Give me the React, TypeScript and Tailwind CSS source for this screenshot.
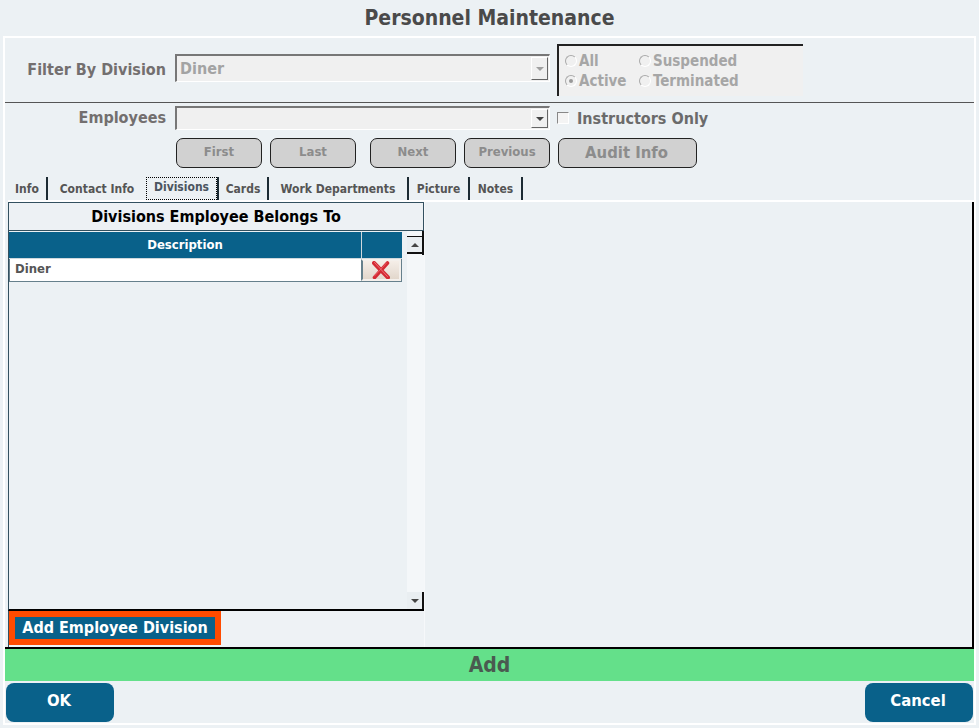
const TABS = [
  { label: 'Info', width: 'w-[40px]' },
  { label: 'Contact Info', width: 'w-[98px]', noDivider: true },
  { label: 'Divisions', width: 'w-[73px]', active: true },
  { label: 'Cards', width: 'w-[50px]' },
  { label: 'Work Departments', width: 'w-[140px]' },
  { label: 'Picture', width: 'w-[61px]' },
  { label: 'Notes', width: 'w-[53px]' },
]

function Arrow({ dim }: { dim?: boolean }) {
  return (
    <div className={'w-0 h-0 border-x-[4px] border-x-transparent border-t-[4px] ' + (dim ? 'border-t-[#a0a0a0]' : 'border-t-[#444]')} />
  )
}

function Select({ value, disabled, className }: { value?: string; disabled?: boolean; className: string }) {
  return (
    <div className={'w-[375px] flex items-stretch bg-[#f0f0f0] border-l-2 border-t-2 border-[#777] border-r border-b border-r-white border-b-white ' + className}>
      <div className="flex-1 pl-[3px] flex items-center text-[16px] font-bold text-[#a3a3a3]">{value}</div>
      <div className="w-[17px] my-[1px] mr-[1px] flex items-center justify-center border-r border-b border-[#666] border-t border-l border-t-white border-l-white">
        <Arrow dim={disabled} />
      </div>
    </div>
  )
}

function Radio({ label, checked, className }: { label: string; checked?: boolean; className: string }) {
  return (
    <div className={'flex items-center gap-[2px] ' + className}>
      <div className="w-[12px] h-[12px] rounded-full border border-[#aaa] border-r-white border-b-white flex items-center justify-center">
        {checked && <div className="w-[4px] h-[4px] rounded-full bg-[#999]" />}
      </div>
      <span>{label}</span>
    </div>
  )
}

function NavButton({ label, className }: { label: string; className: string }) {
  return (
    <button className={'h-[30px] rounded-[7px] border border-[#222] bg-[#d1d1d1] font-bold text-[#8c8c8c] ' + className}>
      {label}
    </button>
  )
}

// red delete cross, drawn with a lighter highlight like the original bitmap
function DeleteIcon() {
  return (
    <svg width="18" height="18" viewBox="0 0 18 18" fill="none">
      <path d="M2 2 L16 16.5" stroke="#d42a34" strokeWidth="4" strokeLinecap="round" />
      <path d="M15.5 2 L2.5 16.5" stroke="#d42a34" strokeWidth="3.6" strokeLinecap="round" />
      <path d="M2.5 1.5 L15.5 15.5" stroke="#f0777c" strokeWidth="0.9" strokeLinecap="round" />
      <path d="M14.5 2 L2.5 15" stroke="#ee6a70" strokeWidth="0.8" strokeLinecap="round" />
    </svg>
  )
}

export default function App() {
  return (
    <div className="w-[979px] h-[728px] bg-[#ecf1f4] flex flex-col overflow-hidden font-['DejaVu_Sans_Condensed','DejaVu_Sans',sans-serif]">
      <h1 className="h-[36px] pt-[2px] shrink-0 flex items-center justify-center text-[21px] font-bold text-[#4a4a4a]">
        Personnel Maintenance
      </h1>

      <div className="mx-[3px] h-[689px] border-2 border-white flex flex-col">
        {/* Filter */}
        <div className="h-[65px] shrink-0 border-b border-[#555] flex items-start">
          <div className="w-[161px] mt-[20px] text-right text-[16px] font-bold text-[#736f6f]">Filter By Division</div>
          <Select value="Diner" disabled className="ml-[9px] mt-[16px] h-[28px]" />
          <div className="ml-[7px] mt-[6px] w-[246px] h-[52px] bg-[#f0f0f0] border-t-2 border-l-2 border-[#222] pl-[6px] pt-[5px] text-[15px] font-bold text-[#a6a6a6] leading-[20px]">
            <div className="flex">
              <Radio label="All" className="w-[74px]" />
              <Radio label="Suspended" className="" />
            </div>
            <div className="flex">
              <Radio label="Active" checked className="w-[74px]" />
              <Radio label="Terminated" className="" />
            </div>
          </div>
        </div>

        {/* Employees */}
        <div className="h-[24px] mt-[3px] shrink-0 flex items-stretch">
          <div className="w-[161px] text-right text-[16px] font-bold text-[#736f6f] leading-[24px]">Employees</div>
          <Select className="ml-[9px]" />
          <div className="ml-[7px] flex items-center">
            <div className="w-[12px] h-[12px] border border-[#888] border-r-white border-b-white bg-[#f4f4f4]" />
            <span className="ml-[8px] pt-[2px] text-[16px] font-bold text-[#6b6b6b]">Instructors Only</span>
          </div>
        </div>

        {/* Record buttons */}
        <div className="flex mt-[8px] ml-[171px] shrink-0">
          <NavButton label="First" className="w-[86px] pb-[3px] text-[13px]" />
          <NavButton label="Last" className="w-[86px] ml-[8px] pb-[3px] text-[13px]" />
          <NavButton label="Next" className="w-[86px] ml-[14px] pb-[3px] text-[13px]" />
          <NavButton label="Previous" className="w-[86px] ml-[8px] pb-[3px] text-[13px]" />
          <NavButton label="Audit Info" className="w-[139px] ml-[8px] pr-[2px] text-[16.5px]" />
        </div>

        {/* Tabs */}
        <div className="flex h-[23px] mt-[9px] ml-[3px] shrink-0">
          {TABS.map((tab) => (
            <div
              key={tab.label}
              className={'flex items-center justify-center text-[12px] font-bold text-[#555] ' + tab.width + (tab.noDivider ? '' : ' border-r-2 border-[#1c2b33]')}
            >
              {tab.active ? (
                <span className="w-[71px] h-[23px] border border-dotted border-black text-center leading-[19px] text-[#4b5560]">{tab.label}</span>
              ) : (
                <span className="pt-[1px]">{tab.label}</span>
              )}
            </div>
          ))}
        </div>

        {/* Tab body */}
        <div className="flex-1 min-h-0 ml-[3px] border-t-2 border-white flex">
          <div className="w-[417px] flex flex-col shrink-0 border-r border-r-[#f6f8fa]">
            <div className="h-[29px] shrink-0 border border-[#33505f] bg-[#edf1f4] flex items-center justify-center text-[16px] font-bold text-black">
              Divisions Employee Belongs To
            </div>
            <div className="flex-1 min-h-0 flex border-b-2 border-l border-b-black border-l-[#33505f]">
              <div className="w-[398px] pt-[1px] bg-[#ecf1f4]">
                <div className="flex w-[393px] h-[27px] bg-[#09618a] border-b border-[#cfd8dd] text-white text-[13px] font-bold">
                  <div className="w-[353px] flex items-center justify-center border-r border-[#cfd8dd]">Description</div>
                  <div className="w-[39px]" />
                </div>
                <div className="flex h-[23px] w-[393px] bg-white border border-t-0 border-[#66808c]">
                  <div className="w-[351px] pl-[5px] text-[13px] font-bold text-[#555] leading-[20px]">Diner</div>
                  <div className="flex-1 bg-linear-to-b from-[#f5eee8] to-[#e2d7cc] border-2 border-l-[#66808c] border-[#f4f0ec] flex items-center justify-center">
                    <DeleteIcon />
                  </div>
                </div>
              </div>
              <div className="w-[17px] bg-[#f4f7f9] flex flex-col justify-between">
                <div className="w-[17px] h-[24px] pt-[5px] border-r-2 border-[#111]">
                  <div className="h-[18px] border-t border-b-2 border-[#111] bg-[#e9eef1] flex items-center justify-center">
                    <div className="rotate-180"><Arrow /></div>
                  </div>
                </div>
                <div className="w-[17px] h-[17px] border-r-2 border-[#111] bg-[#e9eef1] flex items-center justify-center">
                  <Arrow />
                </div>
              </div>
            </div>
            <div className="h-[36px] shrink-0 flex items-start border-l border-[#33505f] bg-[#eef2f5]">
              <button className="w-[212px] h-[34px] border-[6px] border-[#ff4b00] bg-[#09618a] text-white text-[16px] font-bold leading-none">
                Add Employee Division
              </button>
            </div>
          </div>
          <div className="flex-1 border-r-2 border-black" />
        </div>

        {/* Mode bar */}
        <div className="h-[34px] pt-[1px] shrink-0 border-t-2 border-black bg-[#64e08a] flex items-center justify-center text-[21px] font-bold text-[#4a5a50]">
          Add
        </div>

        {/* Footer */}
        <div className="flex justify-between px-[1px] pt-[2px] h-[42px] shrink-0">
          <button className="w-[108px] h-[39px] pb-[2px] pr-[2px] rounded-[8px] bg-[#09618a] text-white text-[16.5px] font-bold">OK</button>
          <button className="w-[108px] h-[39px] pb-[2px] pr-[2px] rounded-[8px] bg-[#09618a] text-white text-[16.5px] font-bold">Cancel</button>
        </div>
      </div>
    </div>
  )
}
